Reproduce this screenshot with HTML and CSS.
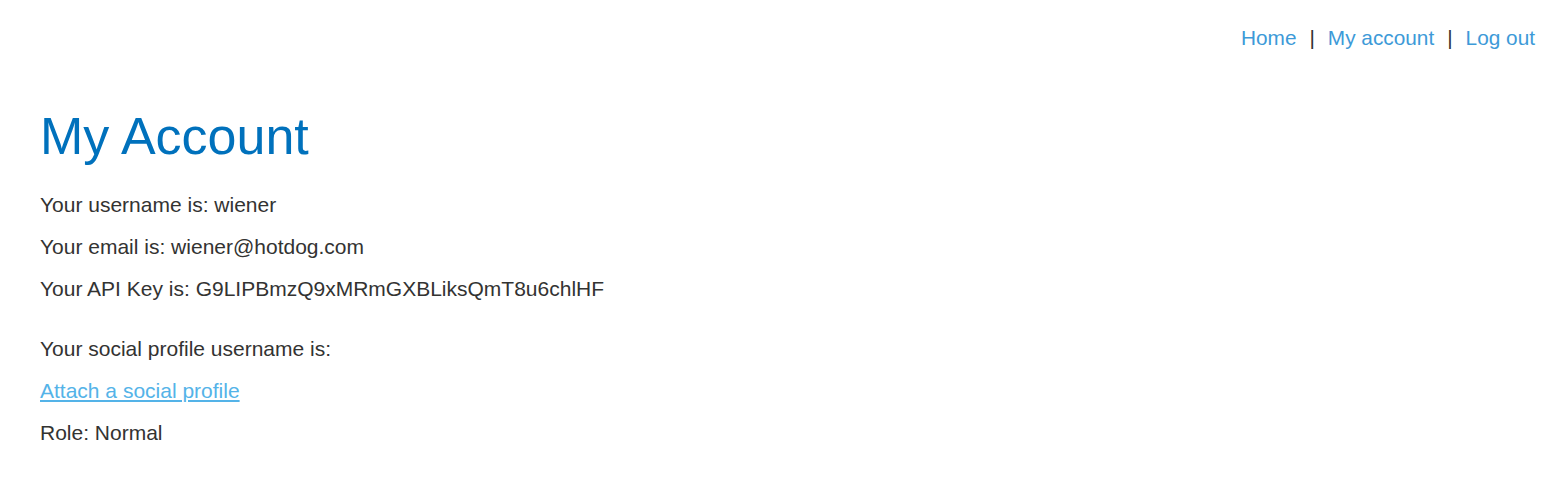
FILE: index.html
```html
<!DOCTYPE html>
<html>
<head>
<meta charset="utf-8">
<link rel="stylesheet" href="styles.css">
<title>My Account</title>
</head>
<body>
<header class="top">
  <nav class="nav">
    <a href="#">Home</a><span class="sep">|</span><a href="#">My account</a><span class="sep">|</span><a href="#">Log out</a>
  </nav>
</header>
<main class="content">
  <h1 class="title">My Account</h1>
  <div class="details">
    <p>Your username is: wiener</p>
    <p>Your email is: wiener@hotdog.com</p>
    <p>Your API Key is: G9LIPBmzQ9xMRmGXBLiksQmT8u6chlHF</p>
  </div>
  <div class="social">
    <p>Your social profile username is:</p>
    <p><a class="attach" href="#">Attach a social profile</a></p>
    <p>Role: Normal</p>
  </div>
</main>
</body>
</html>
```
FILE: styles.css
```css
html, body {
  margin: 0;
  padding: 0;
  background: #fff;
}
body {
  font-family: "Liberation Sans", Arial, sans-serif;
  font-size: 21px;
  color: #333332;
}
.top {
  display: flex;
  justify-content: flex-end;
  padding: 24px 18px 0 0;
}
.nav {
  font-size: 20.8px;
  line-height: 28px;
}
.nav a {
  color: #3d9ad8;
  text-decoration: none;
}
.nav .sep {
  color: #333332;
  padding: 0 13px;
}
.content {
  padding: 0 40px;
}
.title {
  margin: 54px 0 0;
  font-size: 52px;
  font-weight: normal;
  line-height: 60px;
  color: #0071bc;
}
.details p, .social p {
  margin: 0;
  line-height: 42px;
}
.details {
  margin-top: 18px;
}
.social {
  margin-top: 18px;
}
.attach {
  color: #54b3e8;
  text-decoration: underline;
}
```
